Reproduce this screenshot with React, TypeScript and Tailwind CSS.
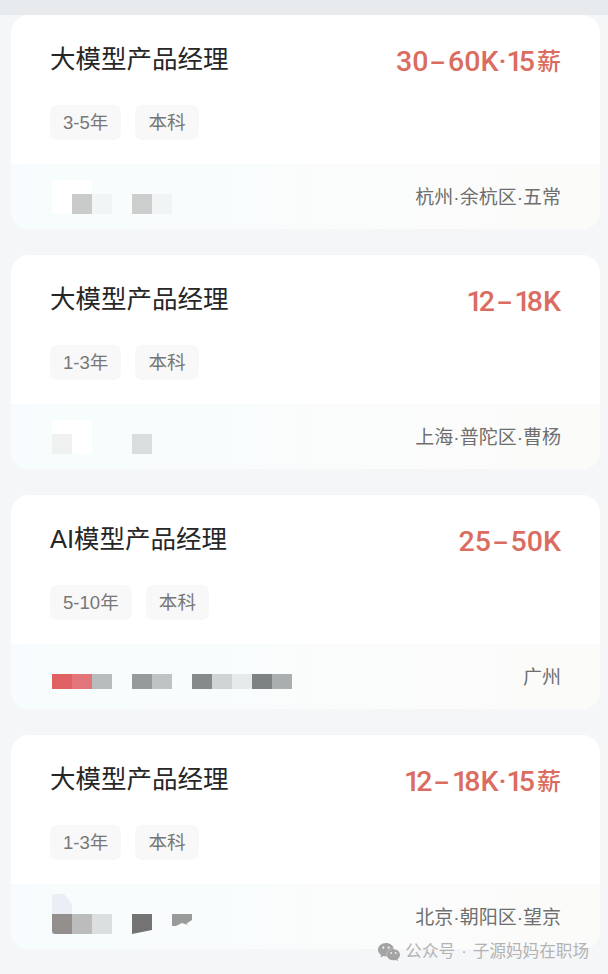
import { SiWechat } from "react-icons/si"

const sans = "font-['Liberation_Sans','Noto_Sans_CJK_SC',sans-serif]"

type Cell = string | null

type Job = {
  title: string
  salary: string
  tags: string[]
  place: string
  // mosaic over the company name: [faint cells above, main cells]
  upper: Cell[]
  lower: Cell[]
  short?: boolean
}

const jobs: Job[] = [
  {
    title: "大模型产品经理",
    salary: "30-60K·15薪",
    tags: ["3-5年", "本科"],
    place: "杭州·余杭区·五常",
    upper: ["#ffffff", "#ffffff"],
    lower: ["#ffffff", "#c9cbcb", "#f1f5f5", null, "#cbcecd", "#f0f4f4"],
  },
  {
    title: "大模型产品经理",
    salary: "12-18K",
    tags: ["1-3年", "本科"],
    place: "上海·普陀区·曹杨",
    upper: ["#ffffff", "#ffffff"],
    lower: ["#eff2f1", "#ffffff", null, null, "#d8dddd"],
  },
  {
    title: "AI模型产品经理",
    salary: "25-50K",
    tags: ["5-10年", "本科"],
    place: "广州",
    short: true,
    upper: [],
    lower: [
      "#df6163",
      "#e27579",
      "#b9bcbd",
      null,
      "#979a9b",
      "#c0c3c3",
      null,
      "#878a8b",
      "#d0d4d5",
      "#e6eaeb",
      "#7f8283",
      "#abaeae",
    ],
  },
]

// digits in the picture are a DIN style face: narrow 1, long dash, small 薪
function Salary({ text }: { text: string }) {
  return (
    <span className="flex h-[36px] items-center pt-[6px] font-['Roboto','Noto_Sans_CJK_SC',sans-serif] text-[28.5px] leading-[30px] font-medium text-[#da6c60]">
      {text.split("").map((ch, i) => {
        if (ch === "-") {
          return (
            <span key={i} className="mx-[5px] inline-block scale-x-[1.7]">
              {ch}
            </span>
          )
        }
        if (ch === "1") {
          return (
            <span key={i} className="inline-block tracking-[-4px]">
              {ch}
            </span>
          )
        }
        if (ch === "薪") {
          return (
            <span key={i} className="ml-[2px] text-[24px]">
              {ch}
            </span>
          )
        }
        return <span key={i}>{ch}</span>
      })}
    </span>
  )
}

function Mosaic({ job }: { job: Job }) {
  return (
    <div className="flex flex-col">
      <div className="flex h-[14px]">
        {job.upper.map((color, i) => (
          <div key={i} className="w-5" style={{ backgroundColor: color ?? "transparent" }} />
        ))}
      </div>
      <div className="flex h-5 items-start">
        {job.lower.map((color, i) => (
          <div
            key={i}
            className={`w-5 ${job.short ? "h-[15px]" : "h-5"}`}
            style={{ backgroundColor: color ?? "transparent" }}
          />
        ))}
      </div>
    </div>
  )
}

function LastMosaic() {
  return (
    <div className="flex flex-col">
      <div className="h-5 w-5 rounded-tl-[3px] bg-[#eceef5] [clip-path:polygon(0_0,60%_0,100%_50%,100%_100%,0_100%)]" />
      <div className="flex h-5">
        <div className="w-5 rounded-bl-[3px] bg-[#938f8c]" />
        <div className="w-5 bg-[#bdbcbc]" />
        <div className="w-5 bg-[#dcdfe0]" />
        <div className="w-5" />
        <svg width="20" height="20" viewBox="0 0 20 20">
          <path d="M0 0H20V16L0 20Z" fill="#737373" />
        </svg>
        <div className="w-5" />
        <svg width="20" height="20" viewBox="0 0 20 20">
          <path d="M0 0H20V6L14 10L18 12L10 9L4 12L0 12Z" fill="#999b9b" />
        </svg>
      </div>
    </div>
  )
}

function Card({ job, last }: { job?: Job; last?: boolean }) {
  const data: Job = job ?? {
    title: "大模型产品经理",
    salary: "12-18K·15薪",
    tags: ["1-3年", "本科"],
    place: "北京·朝阳区·望京",
    upper: [],
    lower: [],
  }

  return (
    <div className="flex h-[214px] flex-col overflow-hidden rounded-[18px] bg-white">
      <div className="flex h-[149px] flex-col px-[39px]">
        <div className="flex items-start justify-between pt-[26px]">
          <h2 className="text-[25.5px] leading-[36px] font-normal text-[#262626]">{data.title}</h2>
          <Salary text={data.salary} />
        </div>
        <div className="mt-[28px] flex gap-[14px]">
          {data.tags.map((tag) => (
            <span
              key={tag}
              className="flex h-[35px] items-center rounded-[7px] bg-[#f8f8f8] px-[13px] text-[18.6px] text-[#777777]"
            >
              {tag}
            </span>
          ))}
        </div>
      </div>
      <div className="relative flex h-[65px] items-center justify-between bg-gradient-to-r from-[#f6fcfd] via-[#fafcfc] to-[#fbfbf9] pr-[39px] pt-[3px]">
        <div className="absolute bottom-[15px] left-[41px]">
          {last ? <LastMosaic /> : <Mosaic job={data} />}
        </div>
        <div />
        <span className="text-[19px] text-[#6f6f6f]">{data.place}</span>
      </div>
    </div>
  )
}

export default function App() {
  return (
    <div className={`${sans} relative h-[974px] w-[608px] overflow-hidden bg-[#f5f6f8]`}>
      {/* Top edge of the previous card */}
      <div className="h-[15px] bg-[#e8ebee]" />

      <div className="flex flex-col gap-[26px] pl-[11px] pr-[8px]">
        {jobs.map((job, i) => (
          <Card key={i} job={job} />
        ))}
        <Card last />
      </div>

      {/* Watermark */}
      <div className="absolute top-[940px] right-[19px] flex items-center gap-[5px] text-[16.6px] text-[#b3b3b3] [word-spacing:1.5px]">
        <SiWechat className="h-[22px] w-[22px] text-[#a3a3a3]" />
        <span>公众号 · 子源妈妈在职场</span>
      </div>
    </div>
  )
}
